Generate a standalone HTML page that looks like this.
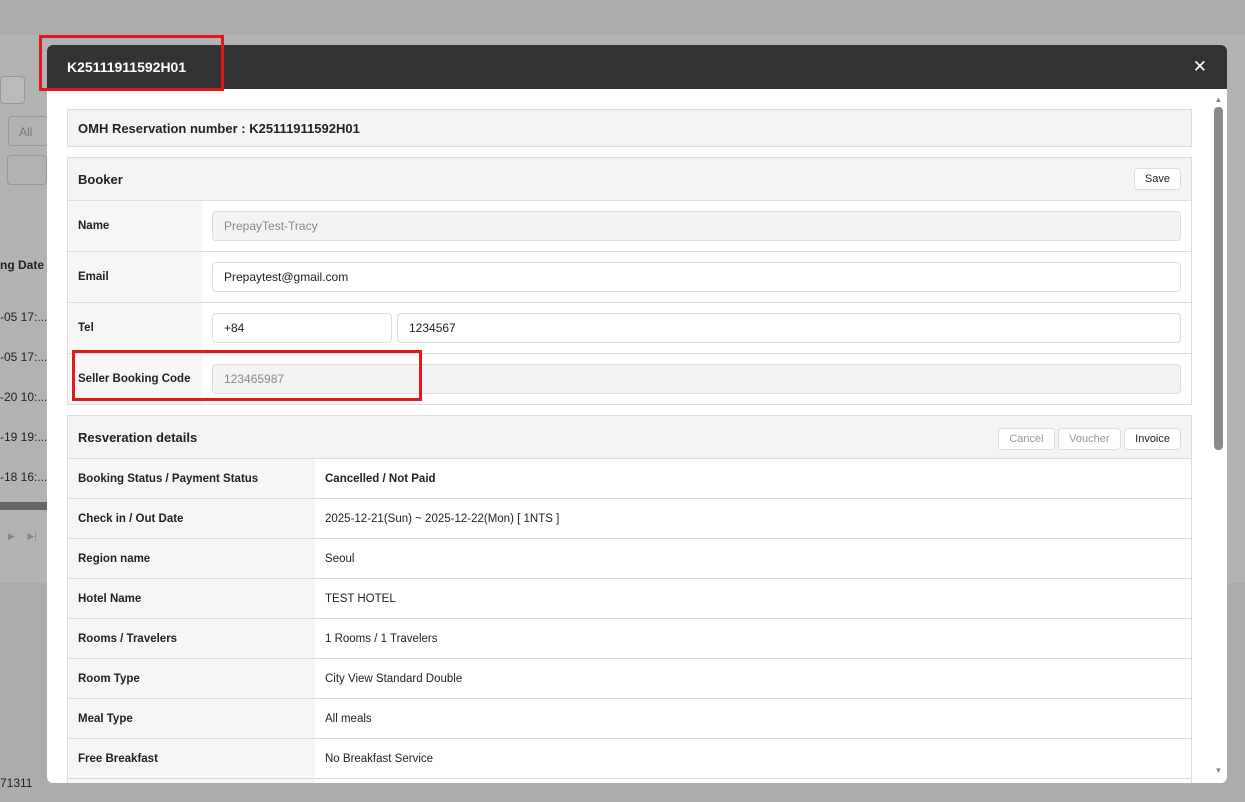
<!DOCTYPE html>
<html><head><style>
*{box-sizing:border-box;margin:0;padding:0}
body{width:1245px;height:802px;overflow:hidden;background:#acacac;font-family:"Liberation Sans",sans-serif;font-size:12px;color:#222;position:relative}
.abs{position:absolute}
.bgpage{left:0;top:35px;width:1245px;height:548px;background:#b3b3b3}
.modal{left:47px;top:45px;width:1180px;height:738px;background:#fff;border-radius:6px;overflow:hidden}
.hdr{height:44px;background:#333;color:#fff;font-weight:bold;font-size:14px;padding:14px 20px}
.close{position:absolute;right:20px;top:12px;color:#fff;font-size:17px}
.box{position:absolute;left:20px;width:1125px;border:1px solid #ddd;background:#fff}
.sh{background:#f4f4f4;font-weight:bold;font-size:13px;padding:0 10px;display:flex;align-items:center;justify-content:space-between}
.row{display:flex;border-top:1px solid #ddd}
.lab{background:#f6f6f6;font-weight:bold;font-size:11.5px;display:flex;align-items:center;padding-left:10px}
.val{display:flex;align-items:center;padding-left:10px;flex:1;font-size:11.5px}
.inp{height:30px;border:1px solid #ddd;border-radius:4px;padding-left:11px;display:flex;align-items:center;font-size:12px}
.btn{border:1px solid #ddd;border-radius:4px;background:#fff;font-weight:normal;font-size:11px;padding:4px 10px}
.red{position:absolute;border:3px solid #e0191f}
</style></head><body>
<div class="abs bgpage"></div>
<div class="abs" style="left:0;top:76px;width:25px;height:28px;border:1px solid #999;border-radius:4px;background:#bbb"></div>
<div class="abs" style="left:8px;top:116px;width:40px;height:30px;border:1px solid #999;border-radius:4px;color:#777;padding:8px 10px">All</div>
<div class="abs" style="left:7px;top:155px;width:40px;height:30px;border:1px solid #999;border-radius:4px"></div>
<div class="abs" style="left:0;top:258px;font-weight:bold">ng Date</div>
<div class="abs" style="left:0;top:310px">-05 17:...</div>
<div class="abs" style="left:0;top:350px">-05 17:...</div>
<div class="abs" style="left:0;top:390px">-20 10:...</div>
<div class="abs" style="left:0;top:430px">-19 19:...</div>
<div class="abs" style="left:0;top:470px">-18 16:...</div>
<div class="abs" style="left:0;top:502px;width:47px;height:8px;background:#666"></div>
<div class="abs" style="left:8px;top:531px;color:#888;font-size:9px">▶ &nbsp; &nbsp; ▶|</div>
<div class="abs" style="left:0;top:776px">71311</div>
<div class="abs modal">
<div class="hdr">K25111911592H01</div><div class="close">✕</div>
<div class="abs" style="right:4px;top:50px;width:9px;height:680px"><div style="color:#888;font-size:8px;text-align:center">▲</div><div style="margin-top:3px;height:343px;background:#8a8a8a;border-radius:4px"></div><div style="position:absolute;bottom:0;width:9px;color:#888;font-size:8px;text-align:center">▼</div></div>
<div class="box sh" style="top:64px;height:38px;font-size:13px">OMH Reservation number : K25111911592H01</div>
<div class="box" style="top:112px;height:248px">
<div class="sh" style="height:42px">Booker<span class="btn" style="margin-right:0">Save</span></div>
<div class="row" style="height:51px"><div class="lab" style="width:134px">Name</div><div class="val"><div class="inp" style="width:969px;background:#f3f3f3;color:#888">PrepayTest-Tracy</div></div></div>
<div class="row" style="height:51px"><div class="lab" style="width:134px">Email</div><div class="val"><div class="inp" style="width:969px">Prepaytest@gmail.com</div></div></div>
<div class="row" style="height:51px"><div class="lab" style="width:134px">Tel</div><div class="val"><div class="inp" style="width:180px">+84</div><div class="inp" style="width:784px;margin-left:5px">1234567</div></div></div>
<div class="row" style="height:51px"><div class="lab" style="width:134px">Seller Booking Code</div><div class="val"><div class="inp" style="width:969px;background:#f3f3f3;color:#888">123465987</div></div></div>
</div>
<div class="box" style="top:370px;height:400px">
<div class="sh" style="height:42px">Resveration details<span><span class="btn" style="color:#999">Cancel</span> <span class="btn" style="color:#999">Voucher</span> <span class="btn">Invoice</span></span></div>
<div class="row" style="height:40px"><div class="lab" style="width:247px">Booking Status / Payment Status</div><div class="val" style="font-weight:bold">Cancelled / Not Paid</div></div>
<div class="row" style="height:40px"><div class="lab" style="width:247px">Check in / Out Date</div><div class="val">2025-12-21(Sun) ~ 2025-12-22(Mon) [ 1NTS ]</div></div>
<div class="row" style="height:40px"><div class="lab" style="width:247px">Region name</div><div class="val">Seoul</div></div>
<div class="row" style="height:40px"><div class="lab" style="width:247px">Hotel Name</div><div class="val">TEST HOTEL</div></div>
<div class="row" style="height:40px"><div class="lab" style="width:247px">Rooms / Travelers</div><div class="val">1 Rooms / 1 Travelers</div></div>
<div class="row" style="height:40px"><div class="lab" style="width:247px">Room Type</div><div class="val">City View Standard Double</div></div>
<div class="row" style="height:40px"><div class="lab" style="width:247px">Meal Type</div><div class="val">All meals</div></div>
<div class="row" style="height:40px"><div class="lab" style="width:247px">Free Breakfast</div><div class="val">No Breakfast Service</div></div>
<div class="row" style="height:40px"><div class="lab" style="width:247px"></div><div class="val"></div></div>
</div>
</div>
<div class="red" style="left:39px;top:35px;width:185px;height:56px"></div>
<div class="red" style="left:72px;top:350px;width:350px;height:51px"></div>
</body></html>
